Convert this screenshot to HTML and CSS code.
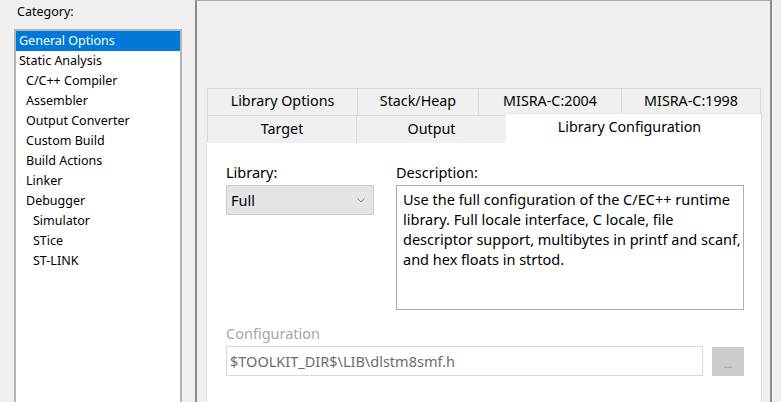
FILE: index.html
```html
<!DOCTYPE html>
<html>
<head>
<meta charset="utf-8">
<link rel="stylesheet" href="styles.css">
</head>
<body>
<div class="window">
  <div class="sidebar">
    <div class="cat-label">Category:</div>
    <ul class="tree">
      <li class="sel">General Options</li>
      <li>Static Analysis</li>
      <li class="l1">C/C++ Compiler</li>
      <li class="l1">Assembler</li>
      <li class="l1">Output Converter</li>
      <li class="l1">Custom Build</li>
      <li class="l1">Build Actions</li>
      <li class="l1">Linker</li>
      <li class="l1">Debugger</li>
      <li class="l2">Simulator</li>
      <li class="l2">STice</li>
      <li class="l2">ST-LINK</li>
    </ul>
  </div>
  <div class="panel">
    <div class="tabs">
      <div class="tab-row back">
        <div class="tab w-libopt">Library Options</div>
        <div class="tab w-stack">Stack/Heap</div>
        <div class="tab w-m2004">MISRA-C:2004</div>
        <div class="tab w-m1998 last">MISRA-C:1998</div>
      </div>
      <div class="tab-row front">
        <div class="tab w-target">Target</div>
        <div class="tab w-output">Output</div>
        <div class="tab w-libcfg active">Library Configuration</div>
      </div>
    </div>
    <div class="page">
      <div class="fields">
        <div class="field lib">
          <div class="label">Library:</div>
          <div class="select">
            <span>Full</span>
            <svg class="chev" width="8" height="5" viewBox="0 0 8 5"><polyline points="0.5,0.5 4,4 7.5,0.5" fill="none" stroke="#8a8a8a" stroke-width="1"/></svg>
          </div>
        </div>
        <div class="field desc">
          <div class="label">Description:</div>
          <div class="desc-box">Use the full configuration of the C/EC++ runtime<br>library. Full locale interface, C locale, file<br>descriptor support, multibytes in printf and scanf,<br>and hex floats in strtod.</div>
        </div>
      </div>
      <div class="config">
        <div class="label config-label">Configuration</div>
        <div class="config-row">
          <div class="input">$TOOLKIT_DIR$\LIB\dlstm8smf.h</div>
          <div class="btn">...</div>
        </div>
      </div>
    </div>
  </div>
</div>
</body>
</html>
```
FILE: styles.css
```css
* { box-sizing: border-box; }
html, body { margin: 0; height: 100%; }
body {
  background: #f0f0f0;
  font-family: "Noto Sans", "Open Sans", sans-serif;
  font-size: 14px;
  line-height: 20px;
  color: #000;
  overflow: hidden;
}
.window { display: flex; height: 402px; overflow: hidden; }

.sidebar { width: 195px; flex: none; padding-top: 2px; overflow: hidden; font-size: 12.5px; }
.cat-label { padding-left: 17px; height: 27px; }
.tree {
  margin: 0 0 0 14px;
  padding: 0;
  list-style: none;
  width: 168px;
  height: 380px;
  border: 2px solid #b4b4b4;
  background: #fff;
}
.tree li { height: 20px; padding-left: 3px; white-space: nowrap; }
.tree li.l1 { padding-left: 10px; }
.tree li.l2 { padding-left: 17px; }
.tree li.sel { background: #0078d7; color: #fff; }

.panel {
  width: 577px;
  flex: none;
  border-left: 2px solid #8c8c8c;
  border-right: 2px solid #8c8c8c;
  border-top: 1px solid #a8a8a8;
  padding-top: 87px;
  display: flex;
  flex-direction: column;
  overflow: hidden;
}
.tabs { margin-left: 10px; font-size: 14.3px; }
.tab-row { display: flex; }
.tab {
  flex: none;
  text-align: center;
  border-top: 1px solid #d9d9d9;
  border-left: 1px solid #d9d9d9;
  white-space: nowrap;
}
.tab.last { border-right: 1px solid #d9d9d9; }
.back .tab { height: 27px; padding-top: 2px; }
.front .tab { height: 28px; padding-top: 3px; }
.front .tab.active {
  height: 30px;
  margin-top: -2px;
  padding: 3px 8px 0 0;
  background: #fff;
  border-right: 1px solid #d9d9d9;
  border-top: 1px solid #e6e6e6;
  border-left: none;
}
.w-libopt { width: 150px; }
.w-stack { width: 121px; }
.w-m2004 { width: 143px; }
.w-m1998 { width: 140px; }
.w-target { width: 149px; }
.w-output { width: 150px; }
.w-libcfg { width: 256px; }

.page {
  margin-left: 9px;
  width: 556px;
  flex: 1;
  background: #fff;
  border-left: 1px solid #e3e3e3;
  border-right: 1px solid #d9d9d9;
  padding: 19px 0 0 19px;
  font-size: 14.5px;
}
.fields { display: flex; gap: 22px; }
.label { height: 23px; }
.lib { width: 148px; }
.select {
  height: 30px;
  background: #e5e5e5;
  border: 1px solid #cccccc;
  display: flex;
  align-items: center;
  justify-content: space-between;
  padding: 0 8px 0 4px;
}
.chev { display: block; }
.desc { width: 348px; }
.desc-box {
  height: 125px;
  border: 1px solid #adadad;
  padding: 3px 6px;
  white-space: nowrap;
}
.config { margin-top: 13px; }
.config-label { color: #a6a6a6; }
.config-row { display: flex; gap: 9px; }
.input {
  width: 477px;
  height: 30px;
  border: 1px solid #d9d9d9;
  color: #6d6d6d;
  padding-left: 3px;
  line-height: 28px;
}
.btn {
  width: 32px;
  height: 29px;
  margin-top: 1px;
  background: #cccccc;
  color: #8a8a8a;
  font-size: 10px;
  text-align: center;
  line-height: 34px;
}
```
